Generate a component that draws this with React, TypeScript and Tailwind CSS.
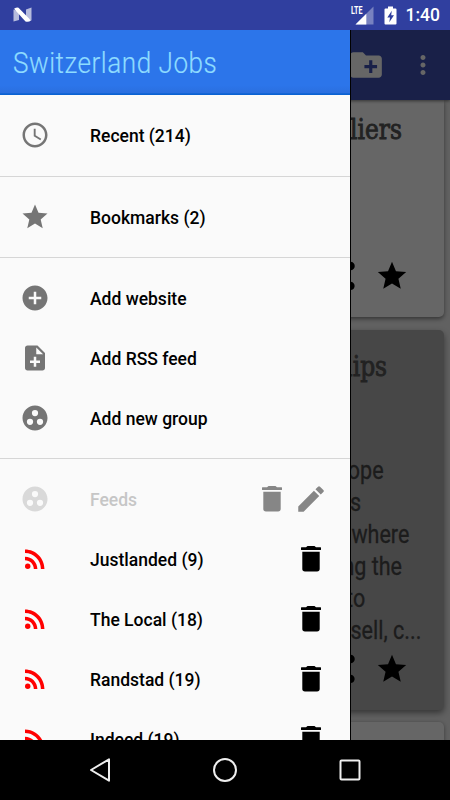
import React from 'react';
import {
  MdAccessTime,
  MdAddCircle,
  MdCreateNewFolder,
  MdEdit,
  MdGrade,
  MdGroupWork,
  MdMoreVert,
  MdNoteAdd,
  MdRssFeed,
  MdShare,
} from 'react-icons/md';

const feeds = [
  { name: 'Justlanded', count: 9 },
  { name: 'The Local', count: 18 },
  { name: 'Randstad', count: 19 },
  { name: 'Indeed', count: 19 },
];

export default function App() {
  return (
    <div className="w-[450px] h-[800px] flex flex-col overflow-hidden bg-black font-['Roboto',sans-serif]">
      <StatusBar />
      <div className="relative h-[710px] overflow-hidden">
        <JobList />
        <div className="absolute inset-0 bg-black/60" />
        <Drawer />
      </div>
      <NavBar />
    </div>
  );
}

function StatusBar() {
  return (
    <header className="h-[30px] shrink-0 bg-[#303f9f] flex items-center justify-between pl-[13px] pr-[10px] text-white">
      <svg width="19" height="16" viewBox="0 0 19 16">
        <path d="M0.5 2.5L6 5v8l-5.500 1.500zM18.500 0.500v13L13 11V2.500z" fill="#fff" fillOpacity="0.65" />
        <path d="M1 1.800Q3.500 0.300 5.500 0.700L18 13.500Q15.500 15.500 12.500 14.500z" fill="#fff" />
      </svg>
      <div className="flex items-center">
        <div className="relative w-[23px] h-[19px] mr-[10px]">
          <svg width="23" height="19" viewBox="0 0 23 19">
            <path d="M22.500 0.500v18h-18z" fill="#fff" fillOpacity="0.35" />
            <path d="M15.300 7.700v10.800H4.500z" fill="#fff" />
          </svg>
          <span className="absolute left-0 -top-px text-[11px] leading-[12px] font-bold origin-left scale-x-[0.65]">LTE</span>
        </div>
        <svg width="13" height="19" viewBox="0 0 13 19" className="mr-[9px]">
          <path d="M4 0.500h5v2h2.500q1 0 1 1v14q0 1-1 1h-10q-1 0-1-1v-14q0-1 1-1H4z" fill="#fff" />
          <path d="M7.800 4.800L3.300 11.500h2.700l-.7 4.700 4.700-6.900H7.200z" fill="#303f9f" />
        </svg>
        <span className="text-[17.5px] leading-[30px] font-medium">1:40</span>
      </div>
    </header>
  );
}

/* Job list, dimmed while the drawer is open */
function JobList() {
  return (
    <main className="isolate h-full bg-[#f2f2f2] flex flex-col">
      <div className="h-[70px] shrink-0 bg-[#3f51b5] flex items-center justify-end pr-[12px] gap-[23px] text-white z-10 shadow-[0_1px_3px_rgba(0,0,0,0.5)]">
        <MdCreateNewFolder size={38} />
        <MdMoreVert size={30} />
      </div>

      <article className="mx-[6px] h-[217px] shrink-0 rounded-b-[5px] bg-white shadow-[0_2px_4px_rgba(0,0,0,0.45)] flex flex-col justify-between">
        <Heading className="pr-[42px] pt-[10px]">Hoteliers</Heading>
        <CardActions className="pb-[24px]" />
      </article>

      <article className="mx-[6px] mt-[13px] h-[380px] shrink-0 rounded-[5px] bg-[#b2b2b2] shadow-[0_3px_6px_rgba(0,0,0,0.45)] flex flex-col">
        <Heading className="pr-[57px] pt-[17px]">Internships</Heading>
        <div className="mt-[69px] text-[#464646]">
          <Line className="pr-[60px]">Europe</Line>
          <Line className="pr-[83px]">jobs</Line>
          <Line className="pr-[35px]">where</Line>
          <Line className="pr-[42px]">using the</Line>
          <Line className="pr-[79px]">to</Line>
          <Line className="pr-[23px]">sell, c...</Line>
        </div>
        <CardActions className="mt-auto pb-[24px]" />
      </article>

      <article className="mx-[6px] mt-[12px] h-[60px] shrink-0 rounded-[5px] bg-white shadow-[0_1px_4px_rgba(0,0,0,0.4)]" />
    </main>
  );
}

function Heading({ className, children }: { className: string; children: React.ReactNode }) {
  return (
    <div className={`flex justify-end ${className}`}>
      <h2 className="text-[27.5px] leading-[39px] text-[#555] font-['DejaVu_Serif',serif] [-webkit-text-stroke:0.9px_#555] origin-right scale-x-[0.85]">
        {children}
      </h2>
    </div>
  );
}

function Line({ className, children }: { className: string; children: React.ReactNode }) {
  return (
    <div className={`flex justify-end ${className}`}>
      <p className="text-[25px] leading-[32px] whitespace-nowrap [-webkit-text-stroke:0.3px_#464646] origin-right scale-x-[0.86]">
        {children}
      </p>
    </div>
  );
}

function CardActions({ className }: { className: string }) {
  return (
    <div className={`flex justify-end gap-[16px] pr-[35px] text-black ${className}`}>
      <MdShare size={34} />
      <MdGrade size={34} />
    </div>
  );
}

function Drawer() {
  return (
    <aside className="absolute left-0 top-0 w-[351px] h-full bg-[#fafafa] border-r border-black overflow-hidden">
      <div className="h-[65px] pl-[13px] bg-[linear-gradient(#2c75ea_85%,#2a6fdf_97%,#0a62d2_98%)] flex items-center">
        <h1 className="text-[30px] leading-[65px] font-light whitespace-nowrap text-[#8fdcff] [-webkit-text-stroke:0.2px_#8fdcff] tracking-[0.6px] origin-left scale-x-[0.87]">
          Switzerland Jobs
        </h1>
      </div>

      <Section className="pt-[10px] pb-[11px]">
        <Item icon={<MdAccessTime size={30} />}>Recent (214)</Item>
      </Section>
      <Section>
        <Item icon={<MdGrade size={30} />}>Bookmarks (2)</Item>
      </Section>
      <Section>
        <Item icon={<MdAddCircle size={30} />}>Add website</Item>
        <Item icon={<MdNoteAdd size={30} />}>Add RSS feed</Item>
        <Item icon={<MdGroupWork size={30} />}>Add new group</Item>
      </Section>

      <div className="pt-[10px]">
        <div className="h-[60px] flex items-center pl-[20px] pr-[22px]">
          <MdGroupWork size={30} className="text-[#d9d9d9]" />
          <span className="ml-[40px] flex-1 text-[17.5px] font-medium text-[#c6c6c6] pt-[2px]">Feeds</span>
          <div className="flex gap-[5px] text-[#868686]">
            <TrashIcon />
            <MdEdit size={34} />
          </div>
        </div>
        {feeds.map((feed) => (
          <div key={feed.name} className="h-[60px] flex items-center pl-[20px] pr-[22px] text-black">
            <MdRssFeed size={30} className="text-[#ff0000]" />
            <span className="ml-[40px] flex-1 text-[17.5px] font-medium pt-[2px]">
              {feed.name} ({feed.count})
            </span>
            <TrashIcon />
          </div>
        ))}
      </div>
    </aside>
  );
}

function Section({ className = 'py-[10px]', children }: { className?: string; children: React.ReactNode }) {
  return <div className={`border-b border-[#d6d6d6] ${className}`}>{children}</div>;
}

function Item({ icon, children }: { icon: React.ReactNode; children: React.ReactNode }) {
  return (
    <div className="h-[60px] flex items-center pl-[20px] text-[#757575]">
      {icon}
      <span className="ml-[40px] text-[17.5px] font-medium text-black pt-[2px]">{children}</span>
    </div>
  );
}

function TrashIcon() {
  return (
    <svg width="34" height="34" viewBox="0 0 34 34" fill="currentColor">
      <path d="M13.500 4h7l1.500 1.300h4.500q.5 0 .5.500v1.800q0 .5-.5.500h-19q-.5 0-.5-.5V5.800q0-.5.500-.5H12z" />
      <path d="M8.300 9.800h17.400v17q0 2.700-2.700 2.700H11q-2.700 0-2.700-2.700z" />
    </svg>
  );
}

function NavBar() {
  return (
    <nav className="h-[60px] shrink-0 bg-black flex items-center justify-center gap-[95px]">
      <svg width="30" height="30" viewBox="0 0 30 30" fill="none" stroke="#eee" strokeWidth="2" strokeLinejoin="round">
        <path d="M24 4.300v21.400L6 15z" />
      </svg>
      <svg width="30" height="30" viewBox="0 0 30 30" fill="none" stroke="#eee" strokeWidth="2">
        <circle cx="15" cy="15" r="11" />
      </svg>
      <svg width="30" height="30" viewBox="0 0 30 30" fill="none" stroke="#eee" strokeWidth="2">
        <rect x="5.500" y="5.500" width="19" height="19" rx="1" />
      </svg>
    </nav>
  );
}
